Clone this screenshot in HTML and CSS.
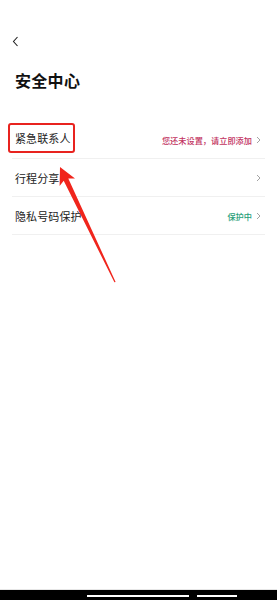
FILE: index.html
```html
<!DOCTYPE html>
<html lang="zh-CN">
<head>
    <meta charset="UTF-8">
    <title>安全中心</title>
    <link rel="stylesheet" href="styles.css">
</head>
<body>
    <div class="page">
        <div class="topbar">
            <svg class="back" width="7" height="11" viewBox="0 0 7 11">
                <path d="M5.5 1 L1.5 5.5 L5.5 10" fill="none" stroke="#222" stroke-width="1.1"/>
            </svg>
        </div>
        <h1 class="title">安全中心</h1>

        <div class="list">
            <div class="row">
                <span class="label highlight">紧急联系人</span>
                <span class="extra warn">您还未设置，请立即添加</span>
                <svg class="chev" width="5" height="8" viewBox="0 0 5 8"><path d="M1 1 L4 4 L1 7" fill="none" stroke="#999" stroke-width="0.9"/></svg>
            </div>
            <div class="row">
                <span class="label">行程分享</span>
                <span class="extra"></span>
                <svg class="chev" width="5" height="8" viewBox="0 0 5 8"><path d="M1 1 L4 4 L1 7" fill="none" stroke="#999" stroke-width="0.9"/></svg>
            </div>
            <div class="row">
                <span class="label">隐私号码保护</span>
                <span class="extra ok">保护中</span>
                <svg class="chev" width="5" height="8" viewBox="0 0 5 8"><path d="M1 1 L4 4 L1 7" fill="none" stroke="#999" stroke-width="0.9"/></svg>
            </div>
        </div>

        <div class="homebar">
            <span class="bar-line long"></span>
            <span class="bar-line short"></span>
        </div>

        <!-- red annotation arrow -->
        <svg class="pointer" width="277" height="600" viewBox="0 0 277 600">
            <polygon points="60,167 75,178.6 68.3,178.5 115.6,282 114.4,282.3 63.7,180.7 59.6,186" fill="#f0251c"/>
        </svg>
    </div>
</body>
</html>
```

FILE: styles.css
```css
body {
    margin: 0;
    padding: 0;
    background: #fff;
    font-family: "Noto Sans CJK SC", "Noto Sans", sans-serif;
    color: #222;
}
.page {
    width: 277px;
    height: 600px;
    display: flex;
    flex-direction: column;
    position: relative;
    overflow: hidden;
}
.topbar {
    height: 48px;
    display: flex;
    align-items: flex-end;
    padding-left: 12px;
}
.back {
    display: block;
    margin-bottom: 1px;
}
.title {
    margin: 22px 0 0 15px;
    font-size: 16px;
    line-height: 20px;
    font-weight: bold;
    color: #111;
    letter-spacing: 0.3px;
}
.list {
    margin: 31px 12px 0 12px;
}
.row {
    height: 37px;
    border-bottom: 1px solid #f0f0f0;
    display: flex;
    align-items: center;
    padding: 0 4px 0 3px;
}
.label {
    font-size: 11px;
    line-height: 12px;
    color: #222;
    letter-spacing: 0.1px;
}
.highlight {
    border: 2px solid #e8231f;
    border-radius: 3px;
    padding: 7px 2px 7px 5px;
    margin-left: -7px;
    margin-top: -3px;
}
.extra {
    flex: 1;
    text-align: right;
    font-size: 8.2px;
    line-height: 10px;
    font-weight: 500;
    margin-right: 4px;
}
.warn {
    color: #c2335f;
}
.ok {
    color: #1f9e78;
}
.chev {
    display: block;
}
.homebar {
    margin-top: auto;
    height: 10px;
    background: #000;
    border-top: 1px solid #e6e6e6;
    position: relative;
}
.bar-line {
    position: absolute;
    top: 5px;
    height: 2px;
    background: #fff;
}
.bar-line.long {
    left: 87px;
    width: 102px;
}
.bar-line.short {
    left: 197px;
    width: 40px;
}
.pointer {
    position: absolute;
    left: 0;
    top: 0;
    pointer-events: none;
}
```
